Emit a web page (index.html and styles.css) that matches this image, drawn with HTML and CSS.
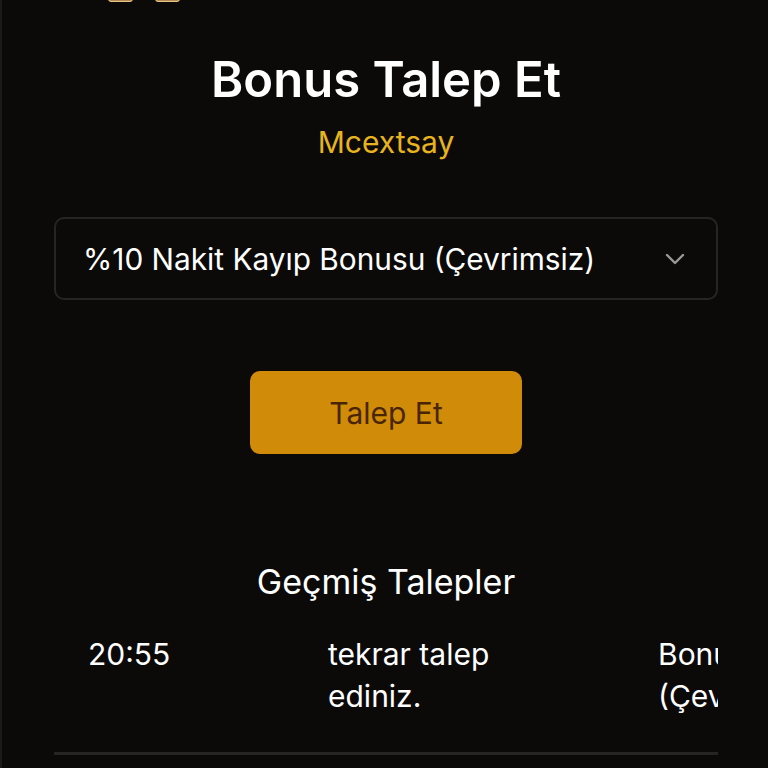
FILE: index.html
```html
<!DOCTYPE html>
<html lang="tr">
<head>
<meta charset="utf-8">
<link rel="stylesheet" href="styles.css">
</head>
<body>
<div class="page">
  <div class="logo">
    <span class="logo-part"></span>
    <span class="logo-part"></span>
  </div>
  <h1 class="title">Bonus Talep Et</h1>
  <div class="user">Mcextsay</div>
  <div class="select">
    <span class="select-text">%10 Nakit Kayıp Bonusu (Çevrimsiz)</span>
    <svg class="chev" width="22" height="14" viewBox="0 0 22 14"><path d="M3 3 L11 11 L19 3" fill="none" stroke="#9a9a9a" stroke-width="2.4" stroke-linecap="round" stroke-linejoin="round"/></svg>
  </div>
  <div class="btn-row"><button class="btn">Talep Et</button></div>
  <h2 class="history">Geçmiş Talepler</h2>
  <div class="table-wrap">
    <div class="row">
      <div class="cell c1">20:55</div>
      <div class="cell c2">tekrar talep ediniz.</div>
      <div class="cell c3">Bonus (Çevrimsiz)</div>
    </div>
  </div>
</div>
</body>
</html>
```
FILE: styles.css
```css
html, body {
  margin: 0;
  padding: 0;
  background: #0b0a09;
}
body {
  font-family: Inter, "Noto Sans", sans-serif;
  color: #ffffff;
}
.page {
  width: 764px;
  height: 768px;
  border-left: 2px solid #1b1a19;
  padding-left: 2px;
  overflow: hidden;
  display: flex;
  flex-direction: column;
  align-items: center;
}
.logo {
  align-self: flex-start;
  display: flex;
  gap: 22px;
  margin-left: 104px;
  height: 4px;
  margin-top: -6px;
}
.logo-part {
  width: 25px;
  height: 8px;
  border-radius: 3px;
  background: #b48a4e;
  border: 1px solid #e6c48c;
  box-sizing: border-box;
}
.title {
  margin: 54px 0 0;
  font-size: 49px;
  font-weight: 600;
  line-height: 56px;
}
.user {
  margin-top: 16px;
  font-size: 30px;
  line-height: 36px;
  color: #e8b41e;
}
.select {
  margin-top: 57px;
  width: 664px;
  height: 83px;
  box-sizing: border-box;
  border: 2px solid #262524;
  border-radius: 10px;
  display: flex;
  align-items: center;
  justify-content: space-between;
  padding: 0 30px 0 27px;
}
.select-text {
  font-size: 29.8px;
  color: #ffffff;
}
.chev { display: block; }
.btn-row {
  margin-top: 71px;
  display: flex;
}
.btn {
  width: 272px;
  height: 83px;
  border: none;
  border-radius: 10px;
  background: #d08b08;
  color: #4a2505;
  font-family: Inter, "Noto Sans", sans-serif;
  font-size: 30px;
}
.history {
  margin: 107px 0 0;
  font-size: 34px;
  font-weight: 400;
  line-height: 42px;
}
.table-wrap {
  margin-top: 30px;
  width: 664px;
  overflow: hidden;
  border-bottom: 3px solid #262524;
  padding-bottom: 35px;
}
.row {
  display: flex;
  width: 900px;
  font-size: 30px;
  line-height: 42px;
}
.cell { flex: none; box-sizing: border-box; }
.c1 { width: 274px; padding-left: 34px; }
.c2 { width: 330px; padding-right: 150px; }
.c3 { width: 200px; }
```
